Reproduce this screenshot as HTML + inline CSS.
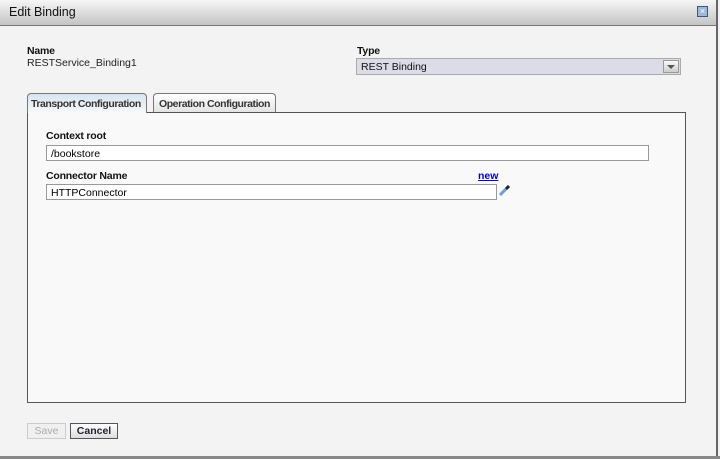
<html><head><style>
body{margin:0;width:720px;height:459px;background:#f3f3f3;font-family:"Liberation Sans",Arial,sans-serif;font-size:10.5px;position:relative;overflow:hidden}
.a{position:absolute;white-space:nowrap}
.title{left:0;top:0;width:716px;height:25px;background:linear-gradient(#f6f6f6,#c4c4c4);border-bottom:1px solid #777;}
.title span{position:absolute;left:9px;top:5px;font-size:12.5px;color:#111}
b{font-weight:bold;color:#111;letter-spacing:-0.2px}
.inp{background:#fff;border:1px solid #999;box-sizing:border-box;padding:2px 4px;font-size:10.5px}
</style></head><body>
<div class="a title"><span>Edit Binding</span>
<div class="a" style="left:697px;top:6px;width:11px;height:11px;border:1px solid #355a8a;background:#9fb8d8;box-sizing:border-box;font-size:9px;line-height:9px;text-align:center;color:#fff">×</div></div>
<div class="a" style="left:716px;top:0;width:2px;height:459px;background:#666"></div>
<div class="a" style="left:0;top:456px;width:720px;height:3px;background:#888"></div>
<div class="a" style="left:27px;top:45px"><b>Name</b><br><span style="color:#222">RESTService_Binding1</span></div>
<div class="a" style="left:357px;top:45px"><b>Type</b></div>
<div class="a" style="left:356px;top:58px;width:325px;height:17px;background:#dcdce8;border:1px solid #aaa;box-sizing:border-box;padding:2px 4px;color:#111">REST Binding
<div class="a" style="right:1px;top:1px;width:16px;height:13px;background:linear-gradient(#fafafa,#ccc);border:1px solid #999;box-sizing:border-box"><div class="a" style="left:3px;top:4px;border-left:4px solid transparent;border-right:4px solid transparent;border-top:4px solid #555"></div></div></div>
<div class="a" style="left:27px;top:93px;width:120px;height:20px;border:1px solid #777;border-bottom:none;border-radius:4px 4px 0 0;background:linear-gradient(#d5e4f4,#f8f8f8);box-sizing:border-box;padding:4px 0 0 3px;z-index:2;overflow:hidden"><b style="color:#333;letter-spacing:-0.45px">Transport Configuration</b></div>
<div class="a" style="left:153px;top:93px;width:123px;height:19px;border:1px solid #777;border-bottom:none;border-radius:4px 4px 0 0;background:linear-gradient(#fff,#e4e4e4);box-sizing:border-box;padding:4px 0 0 5px;overflow:hidden"><b style="color:#333;letter-spacing:-0.45px">Operation Configuration</b></div>
<div class="a" style="left:27px;top:112px;width:659px;height:291px;border:1px solid #555;background:#f9f9f9;box-sizing:border-box"></div>
<div class="a" style="left:46px;top:130px"><b>Context root</b></div>
<div class="a inp" style="left:46px;top:145px;width:603px;height:16px">/bookstore</div>
<div class="a" style="left:46px;top:170px"><b>Connector Name</b></div>
<div class="a" style="left:478px;top:170px;color:#00c;text-decoration:underline;font-weight:bold">new</div>
<div class="a inp" style="left:46px;top:184px;width:451px;height:16px">HTTPConnector</div>
<svg class="a" style="left:499px;top:184px" width="12" height="12"><path d="M1 11 L7 5" stroke="#6aa0d8" stroke-width="3"/><path d="M7 5 L10 2" stroke="#222" stroke-width="3"/></svg>
<div class="a" style="left:27px;top:423px;width:39px;height:16px;border:1px solid #ccc;box-sizing:border-box;text-align:center;line-height:14px;color:#aaa;background:#f0f0f0">Save</div>
<div class="a" style="left:70px;top:423px;width:48px;height:16px;border:1px solid #555;box-sizing:border-box;text-align:center;line-height:14px;font-weight:bold;color:#223;background:linear-gradient(#fff,#ddd)">Cancel</div>
</body></html>
